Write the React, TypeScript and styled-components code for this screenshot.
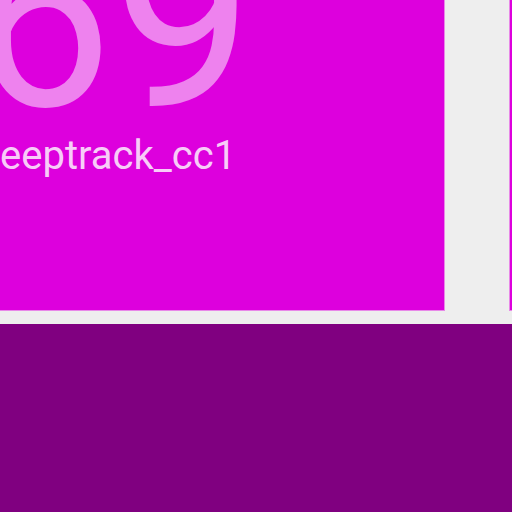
import React from 'react';
import styled, { createGlobalStyle } from 'styled-components';

const GlobalStyle = createGlobalStyle`
  * { box-sizing: border-box; }
  body { margin: 0; overflow: hidden; background: #eeeeee; font-family: Roboto, sans-serif; }
`;

const Screen = styled.main`
  display: flex;
  flex-direction: column;
  height: 100vh;
  overflow: hidden;
`;

const Cards = styled.section`
  display: grid;
  grid-template-columns: minmax(0, 1fr) 3px;
  column-gap: 64px;
  padding-bottom: 13px;
`;

const Card = styled.article`
  height: 311px;
  overflow: hidden;
  background: #dd00dd;
  border: 0 solid #e888e8;
  border-width: 0 1px 1px 0;
  display: flex;
  flex-direction: column;
  align-items: flex-start;
`;

const NextCard = styled(Card)`
  border-width: 0 0 1px 1px;
`;

const Score = styled.div`
  margin: -79px 0 0 -28px;
  font-size: 250px;
  line-height: 200px;
  color: #ee82ee;
`;

const Name = styled.div`
  margin-top: 11px;
  font-size: 40px;
  line-height: 48px;
  white-space: nowrap;
  color: #f8ccf8;
`;

const Footer = styled.footer`
  flex: 1;
  background: #800080;
`;

export default function App() {
  return (
    <>
      <GlobalStyle />
      <Screen>
        <Cards>
          <Card>
            <Score>69</Score>
            <Name>eeptrack_cc1</Name>
          </Card>
          <NextCard />
        </Cards>
        <Footer />
      </Screen>
    </>
  );
}
